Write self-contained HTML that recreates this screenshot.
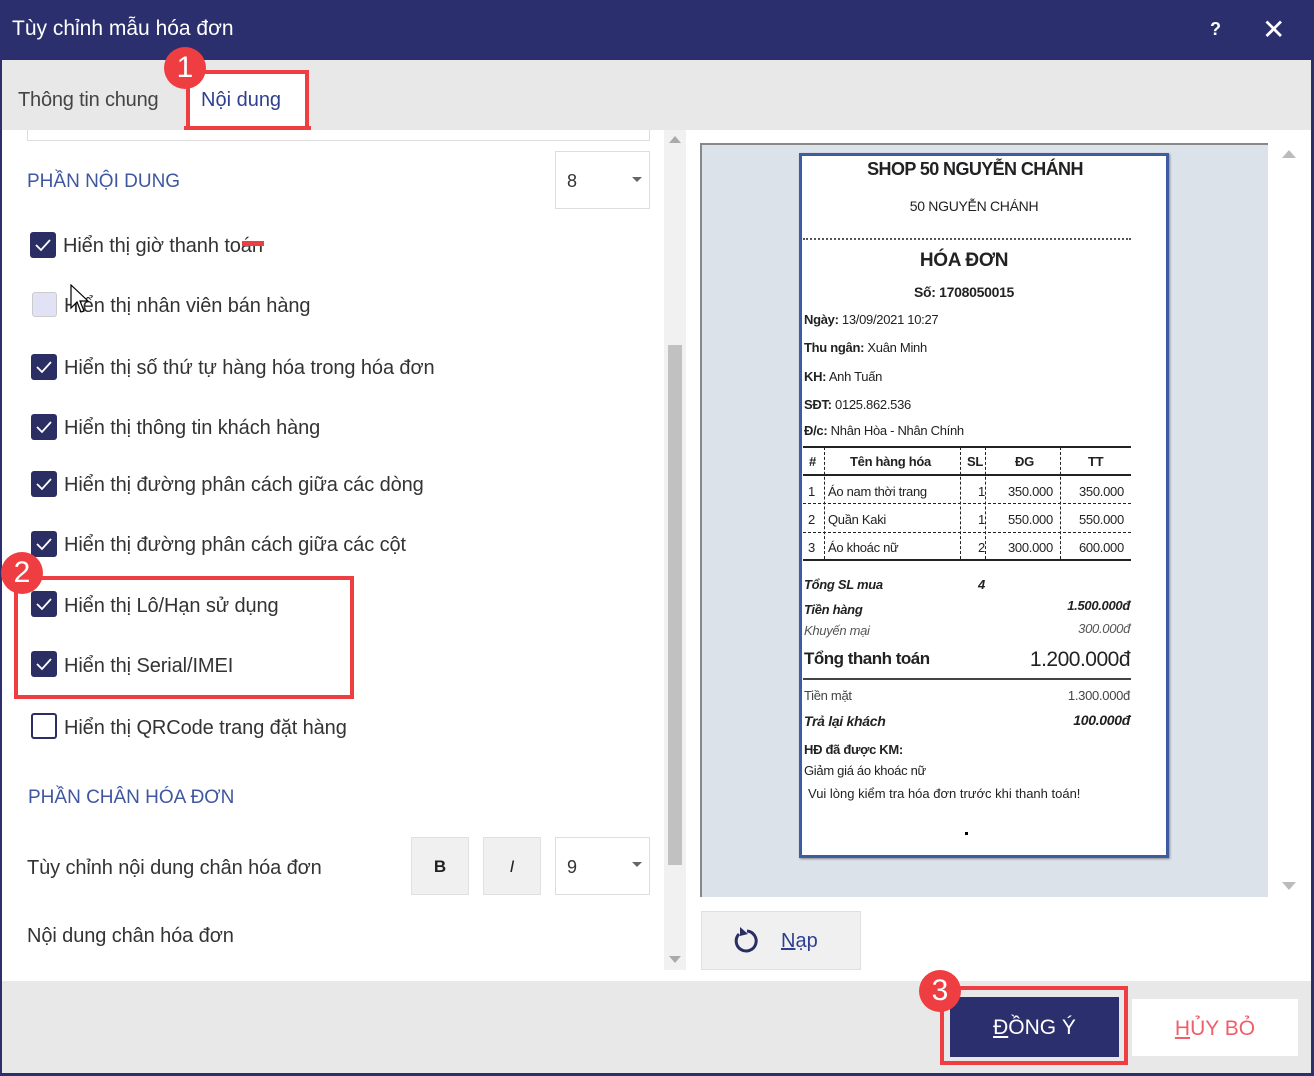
<!DOCTYPE html>
<html><head><meta charset="utf-8"><style>
*{margin:0;padding:0;box-sizing:border-box}
body{width:1314px;height:1076px;position:relative;overflow:hidden;background:#fff;font-family:"Liberation Sans","DejaVu Sans",sans-serif;color:#333}
.a{position:absolute}
.cb{position:absolute;width:26px;height:26px;border-radius:3px;background:#2b2e63}
.cb svg{position:absolute;left:4px;top:5px}
.lbl{position:absolute;font-size:20px;color:#333;white-space:nowrap;letter-spacing:-0.1px}
.r{position:absolute;font-size:13px;color:#222;white-space:nowrap;font-family:"Liberation Sans",sans-serif;letter-spacing:-0.3px}
.rr{position:absolute;right:184px;font-size:13px;color:#222;white-space:nowrap;letter-spacing:-0.3px}
.badge{position:absolute;width:42px;height:42px;border-radius:50%;background:#ef3e42;color:#fff;font-size:30px;text-align:center;line-height:42px}
</style></head><body>
<div class="a" style="left:0;top:0;width:1314px;height:60px;background:#2c2f6e"></div>
<div class="a" style="left:12px;top:17px;font-size:21px;color:#fff">Tùy chỉnh mẫu hóa đơn</div>
<div class="a" style="left:1210px;top:19px;font-size:18px;color:#fff;font-weight:bold">?</div>
<div class="a" style="left:1262px;top:13px;font-size:28px;color:#fff;font-weight:bold">✕</div>
<div class="a" style="left:0;top:60px;width:2px;height:1016px;background:#2c2f6e"></div>
<div class="a" style="left:1311px;top:60px;width:3px;height:1016px;background:#2c2f6e"></div>
<div class="a" style="left:0;top:1073px;width:1314px;height:3px;background:#2c2f6e"></div>
<div class="a" style="left:2px;top:60px;width:1309px;height:70px;background:#e8e8e8"></div>
<div class="a" style="left:18px;top:89px;font-size:20px;color:#444;letter-spacing:-0.2px">Thông tin chung</div>
<div class="a" style="left:186px;top:70px;width:123px;height:60px;background:#fff;border:4px solid #ef3e42;border-bottom:0"></div>
<div class="a" style="left:201px;top:89px;font-size:20px;color:#2f3f8f">Nội dung</div>
<div class="a" style="left:184px;top:126px;width:127px;height:4px;background:#ef3e42"></div>
<div class="badge" style="left:164px;top:47px">1</div>
<div class="a" style="left:27px;top:130px;width:623px;height:11px;border:1px solid #ddd;border-top:0"></div>
<div class="a" style="left:27px;top:171px;font-size:19px;color:#3f57a0">PHẦN NỘI DUNG</div>
<div class="a" style="left:555px;top:151px;width:95px;height:58px;border:1px solid #ddd"></div>
<div class="a" style="left:567px;top:171px;font-size:18px">8</div>
<div class="a" style="left:632px;top:177px;border:5px solid transparent;border-top:5px solid #666"></div>

<div class="cb" style="left:30px;top:232px"><svg width="18" height="16"><path d="M2 8 L7 13 L16 3" stroke="#fff" stroke-width="1.8" fill="none"/></svg></div>
<div class="lbl" style="left:63px;top:235px">Hiển thị giờ thanh toán</div>
<div class="a" style="left:242px;top:241px;width:22px;height:5px;background:#ef3e42"></div>
<div class="a" style="left:32px;top:292px;width:25px;height:25px;border:1px solid #ccc;border-radius:3px;background:#e1e2f6"></div>
<div class="lbl" style="left:64px;top:295px">Hiển thị nhân viên bán hàng</div>
<svg class="a" style="left:70px;top:284px" width="22" height="32"><path d="M1 1 L1 24 L7 18 L11 28 L14 27 L10 17 L18 17 Z" fill="#fff" stroke="#000" stroke-width="1.2"/></svg>
<div class="cb" style="left:31px;top:354px"><svg width="18" height="16"><path d="M2 8 L7 13 L16 3" stroke="#fff" stroke-width="1.8" fill="none"/></svg></div>
<div class="lbl" style="left:64px;top:357px">Hiển thị số thứ tự hàng hóa trong hóa đơn</div>
<div class="cb" style="left:31px;top:414px"><svg width="18" height="16"><path d="M2 8 L7 13 L16 3" stroke="#fff" stroke-width="1.8" fill="none"/></svg></div>
<div class="lbl" style="left:64px;top:417px">Hiển thị thông tin khách hàng</div>
<div class="cb" style="left:31px;top:471px"><svg width="18" height="16"><path d="M2 8 L7 13 L16 3" stroke="#fff" stroke-width="1.8" fill="none"/></svg></div>
<div class="lbl" style="left:64px;top:474px">Hiển thị đường phân cách giữa các dòng</div>
<div class="cb" style="left:31px;top:531px"><svg width="18" height="16"><path d="M2 8 L7 13 L16 3" stroke="#fff" stroke-width="1.8" fill="none"/></svg></div>
<div class="lbl" style="left:64px;top:534px">Hiển thị đường phân cách giữa các cột</div>
<div class="a" style="left:14px;top:576px;width:340px;height:123px;border:4px solid #ef3e42"></div>
<div class="badge" style="left:1px;top:552px">2</div>
<div class="cb" style="left:31px;top:591px"><svg width="18" height="16"><path d="M2 8 L7 13 L16 3" stroke="#fff" stroke-width="1.8" fill="none"/></svg></div>
<div class="lbl" style="left:64px;top:595px">Hiển thị Lô/Hạn sử dụng</div>
<div class="cb" style="left:31px;top:651px"><svg width="18" height="16"><path d="M2 8 L7 13 L16 3" stroke="#fff" stroke-width="1.8" fill="none"/></svg></div>
<div class="lbl" style="left:64px;top:655px">Hiển thị Serial/IMEI</div>
<div class="a" style="left:31px;top:713px;width:26px;height:26px;border:2px solid #2b2e63;border-radius:3px"></div>
<div class="lbl" style="left:64px;top:717px">Hiển thị QRCode trang đặt hàng</div>
<div class="a" style="left:28px;top:787px;font-size:19px;color:#3f57a0">PHẦN CHÂN HÓA ĐƠN</div>
<div class="lbl" style="left:27px;top:857px">Tùy chỉnh nội dung chân hóa đơn</div>
<div class="a" style="left:411px;top:837px;width:58px;height:58px;background:#f0f0f0;border:1px solid #e0e0e0;text-align:center;line-height:58px;font-weight:bold;font-size:17px;color:#222">B</div>
<div class="a" style="left:483px;top:837px;width:58px;height:58px;background:#f0f0f0;border:1px solid #e0e0e0;text-align:center;line-height:58px;font-style:italic;font-size:17px;color:#222">I</div>
<div class="a" style="left:555px;top:837px;width:95px;height:58px;border:1px solid #ddd"></div>
<div class="a" style="left:567px;top:857px;font-size:18px">9</div>
<div class="a" style="left:632px;top:862px;border:5px solid transparent;border-top:5px solid #666"></div>
<div class="lbl" style="left:27px;top:925px">Nội dung chân hóa đơn</div>
<div class="a" style="left:664px;top:130px;width:22px;height:840px;background:#f1f1f1"></div>
<div class="a" style="left:669px;top:136px;border:6px solid transparent;border-bottom:7px solid #aaa;border-top:0"></div>
<div class="a" style="left:668px;top:345px;width:14px;height:520px;background:#c1c1c1"></div>
<div class="a" style="left:669px;top:956px;border:6px solid transparent;border-top:7px solid #aaa;border-bottom:0"></div>
<div class="a" style="left:700px;top:143px;width:568px;height:754px;background:#dbe2ea;border-top:2px solid #888;border-left:2px solid #888"></div>
<div class="a" style="left:1282px;top:150px;border:7px solid transparent;border-bottom:8px solid #bbb;border-top:0"></div>
<div class="a" style="left:1282px;top:882px;border:7px solid transparent;border-top:8px solid #bbb;border-bottom:0"></div>
<div class="a" style="left:799px;top:153px;width:370px;height:705px;background:#fff;border:3px solid #3c5ea0;box-shadow:1px 1px 2px #888"></div>
<div class="r" style="left:800px;top:159px;width:350px;text-align:center;font-size:18px;font-weight:bold;letter-spacing:-0.6px">SHOP 50 NGUYỄN CHÁNH</div>
<div class="r" style="left:800px;top:198px;width:348px;text-align:center;font-size:14px">50 NGUYỄN CHÁNH</div>
<div class="a" style="left:803px;top:238px;width:328px;border-top:2px dotted #555"></div>
<div class="r" style="left:800px;top:250px;width:328px;text-align:center;font-size:19px;font-weight:bold">HÓA ĐƠN</div>
<div class="r" style="left:800px;top:284px;width:328px;text-align:center;font-size:14px;font-weight:bold">Số: 1708050015</div>
<div class="r" style="left:804px;top:312px"><b>Ngày:</b> 13/09/2021 10:27</div>
<div class="r" style="left:804px;top:340px"><b>Thu ngân:</b> Xuân Minh</div>
<div class="r" style="left:804px;top:369px"><b>KH:</b> Anh Tuấn</div>
<div class="r" style="left:804px;top:397px"><b>SĐT:</b> 0125.862.536</div>
<div class="r" style="left:804px;top:423px"><b>Đ/c:</b> Nhân Hòa - Nhân Chính</div>
<div class="a" style="left:803px;top:446px;width:328px;border-top:2px solid #222"></div>
<div class="a" style="left:803px;top:474px;width:328px;border-top:2px solid #222"></div>
<div class="a" style="left:803px;top:503px;width:328px;border-top:1px dashed #222"></div>
<div class="a" style="left:803px;top:532px;width:328px;border-top:1px dashed #222"></div>
<div class="a" style="left:803px;top:559px;width:328px;border-top:2px solid #222"></div>
<div class="a" style="left:824px;top:447px;height:112px;border-left:1px dashed #222"></div>
<div class="a" style="left:960px;top:447px;height:112px;border-left:1px dashed #222"></div>
<div class="a" style="left:985px;top:447px;height:112px;border-left:1px dashed #222"></div>
<div class="a" style="left:1060px;top:447px;height:112px;border-left:1px dashed #222"></div>
<div class="r" style="left:809px;top:454px;font-weight:bold">#</div>
<div class="r" style="left:850px;top:454px;font-weight:bold">Tên hàng hóa</div>
<div class="r" style="left:967px;top:454px;font-weight:bold">SL</div>
<div class="r" style="left:1015px;top:454px;font-weight:bold">ĐG</div>
<div class="r" style="left:1088px;top:454px;font-weight:bold">TT</div>
<div class="r" style="left:808px;top:484px">1</div><div class="r" style="left:828px;top:484px">Áo nam thời trang</div><div class="r" style="left:978px;top:484px">1</div><div class="r" style="left:1008px;top:484px">350.000</div><div class="r" style="left:1079px;top:484px">350.000</div>
<div class="r" style="left:808px;top:512px">2</div><div class="r" style="left:828px;top:512px">Quần Kaki</div><div class="r" style="left:978px;top:512px">1</div><div class="r" style="left:1008px;top:512px">550.000</div><div class="r" style="left:1079px;top:512px">550.000</div>
<div class="r" style="left:808px;top:540px">3</div><div class="r" style="left:828px;top:540px">Áo khoác nữ</div><div class="r" style="left:978px;top:540px">2</div><div class="r" style="left:1008px;top:540px">300.000</div><div class="r" style="left:1079px;top:540px">600.000</div>
<div class="r" style="left:804px;top:577px;font-style:italic;font-weight:bold">Tổng SL mua</div>
<div class="r" style="left:978px;top:577px;font-style:italic;font-weight:bold">4</div>
<div class="r" style="left:804px;top:602px;font-style:italic;font-weight:bold">Tiền hàng</div>
<div class="rr" style="top:598px;font-style:italic;font-weight:bold">1.500.000đ</div>
<div class="r" style="left:804px;top:623px;font-style:italic;color:#555">Khuyến mại</div>
<div class="rr" style="top:621px;font-style:italic;color:#555">300.000đ</div>
<div class="r" style="left:804px;top:649px;font-size:17px;font-weight:bold;letter-spacing:-0.5px">Tổng thanh toán</div>
<div class="rr" style="top:648px;font-size:21px;letter-spacing:-0.5px">1.200.000đ</div>
<div class="a" style="left:803px;top:678px;width:328px;border-top:2px solid #444"></div>
<div class="r" style="left:804px;top:688px;color:#444">Tiền mặt</div>
<div class="rr" style="top:688px;color:#444">1.300.000đ</div>
<div class="r" style="left:804px;top:713px;font-style:italic;font-weight:bold;font-size:14px">Trả lại khách</div>
<div class="rr" style="top:712px;font-style:italic;font-weight:bold;font-size:14px">100.000đ</div>
<div class="r" style="left:804px;top:742px;font-weight:bold">HĐ đã được KM:</div>
<div class="r" style="left:804px;top:763px">Giảm giá áo khoác nữ</div>
<div class="r" style="left:808px;top:786px;letter-spacing:0">Vui lòng kiểm tra hóa đơn trước khi thanh toán!</div>
<div class="a" style="left:965px;top:832px;width:3px;height:3px;background:#000"></div>
<div class="a" style="left:701px;top:911px;width:160px;height:59px;background:#f0f0f0;border:1px solid #e0e0e0"></div>
<svg class="a" style="left:732px;top:925px" width="30" height="32"><path d="M7 9 A10 10 0 1 0 15 6" stroke="#2b2e63" stroke-width="3" fill="none"/><path d="M8 2 L8 11 L16 9 Z" fill="#2b2e63"/></svg>
<div class="a" style="left:781px;top:930px;font-size:20px;color:#2f3f8f"><u>N</u>ạp</div>
<div class="a" style="left:2px;top:981px;width:1309px;height:92px;background:#e8e8e8"></div>
<div class="a" style="left:940px;top:986px;width:188px;height:79px;border:4px solid #ef3e42"></div>
<div class="a" style="left:950px;top:997px;width:169px;height:60px;background:#2c2f6e;color:#fff;font-size:21px;text-align:center;line-height:62px"><u>Đ</u>ỒNG Ý</div>
<div class="badge" style="left:919px;top:970px">3</div>
<div class="a" style="left:1132px;top:999px;width:166px;height:57px;background:#fff;color:#ef5f6a;font-size:21px;text-align:center;line-height:59px"><u>H</u>ỦY BỎ</div>
</body></html>
